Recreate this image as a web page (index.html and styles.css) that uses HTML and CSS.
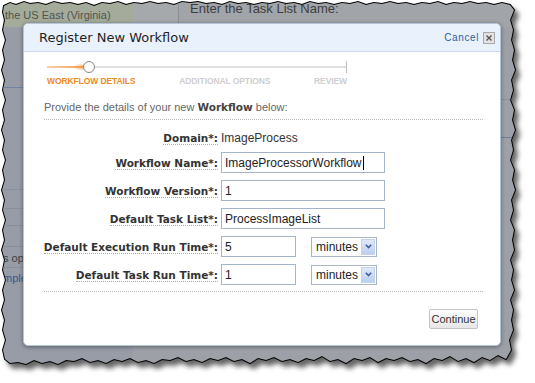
FILE: index.html
```html
<!DOCTYPE html>
<html lang="en">
<head>
<meta charset="utf-8">
<title>Register New Workflow</title>
<link rel="stylesheet" href="styles.css">
</head>
<body>
<div class="scene">
  <svg class="torn" width="535" height="383" viewBox="0 0 535 383">
    <defs>
      <clipPath id="tornClip" clipPathUnits="userSpaceOnUse">
        <polygon id="tornShape" points="4,6 10,3 16,5 24,2 30,4 38,3 46,5 54,2 62,4 70,3 78,5 86,3 94,6 102,3 110,4 118,2 126,5 134,3 142,4 150,2 158,4 166,3 174,5 182,2 190,3 198,2 206,4 214,3 222,5 230,2 238,4 246,3 254,5 262,3 270,4 278,2 286,4 294,3 302,5 310,2 318,4 326,3 334,5 342,3 350,4 358,2 366,5 374,3 382,4 390,2 398,4 406,3 414,5 422,3 430,4 438,2 446,5 454,3 462,4 470,2 478,4 486,3 494,5 502,3 510,5 514,10 510,20 513,30 511,40 514,50 512,60 515,70 511,80 513,90 510,100 514,110 512,120 515,130 511,140 513,150 510,160 514,170 512,180 515,190 511,200 513,210 510,220 514,230 512,240 514,250 510,260 513,270 511,280 514,290 510,300 513,310 511,320 513,330 509,340 511,350 506,359 498,355 490,360 482,357 474,362 466,358 458,361 450,356 442,360 434,358 426,363 418,359 410,361 402,357 394,360 386,358 378,362 370,357 362,360 354,358 346,363 338,359 330,361 322,356 314,360 306,358 298,362 290,359 282,361 274,357 266,360 258,358 250,363 242,359 234,361 226,357 218,360 210,358 202,362 194,359 186,361 178,357 170,360 162,359 154,363 146,360 138,362 130,358 122,361 114,359 106,363 98,360 90,362 82,358 74,361 66,360 58,364 50,361 42,363 34,360 26,364 18,362 10,363 5,359 3,350 6,340 3,330 5,320 2,310 5,300 3,290 6,280 3,270 5,260 2,250 5,240 3,230 6,220 3,210 5,200 2,190 5,180 3,170 6,160 3,150 5,140 2,130 5,120 3,110 6,100 3,90 5,80 2,70 5,60 3,50 6,40 3,30 5,20 3,12"/>
      </clipPath>
      <filter id="tornShadow" x="-5%" y="-5%" width="115%" height="115%">
        <feDropShadow dx="4" dy="5" stdDeviation="2.5" flood-color="#000" flood-opacity="0.6"/>
      </filter>
    </defs>
    <use href="#tornShape" class="torn-fill" filter="url(#tornShadow)"/>
  </svg>

  <div class="backdrop">
    <div class="bd-top">
      <div class="bd-region">the US East (Virginia)</div>
      <div class="bd-sep"></div>
      <div class="bd-heading">Enter the Task List Name:</div>
    </div>
    <div class="bd-body">
      <div class="bd-nav">
        <div class="nav-row nav-r1"></div>
        <div class="nav-row nav-r2"></div>
        <div class="nav-row nav-r3"></div>
        <div class="nav-row nav-r4"></div>
        <div class="nav-row nav-r5"></div>
        <div class="nav-row nav-text">s options</div>
        <div class="nav-row nav-link">mples</div>
      </div>
      <div class="bd-main">
        <div class="main-row main-r1"></div>
        <div class="main-row main-r2"></div>
      </div>
    </div>
  </div>

  <div class="dialog">
    <div class="dlg-head">
      <div class="dlg-title">Register New Workflow</div>
      <div class="dlg-cancel">
        <a class="cancel">Cancel</a>
        <span class="close"><svg width="6" height="6" viewBox="0 0 6 6"><path d="M0.5 0.5 L5.5 5.5 M5.5 0.5 L0.5 5.5" stroke="#555" stroke-width="1.4"/></svg></span>
      </div>
    </div>
    <div class="dlg-body">
      <div class="steps">
        <div class="track">
          <span class="trail"></span>
          <span class="glow"></span>
          <span class="knob"></span>
          <span class="tick"></span>
        </div>
        <div class="step-labels">
          <span class="step active">WORKFLOW DETAILS</span>
          <span class="step">ADDITIONAL OPTIONS</span>
          <span class="step">REVIEW</span>
        </div>
      </div>
      <p class="intro">Provide the details of your new <b>Workflow</b> below:</p>
      <div class="form">
        <div class="lbl"><span>Domain*:</span></div>
        <div class="val">ImageProcess</div>

        <div class="lbl"><span>Workflow Name*:</span></div>
        <div class="ctl"><input class="inp" type="text" value="ImageProcessorWorkflow"><span class="caret"></span></div>

        <div class="lbl"><span>Workflow Version*:</span></div>
        <div class="ctl"><input class="inp" type="text" value="1"></div>

        <div class="lbl"><span>Default Task List*:</span></div>
        <div class="ctl"><input class="inp" type="text" value="ProcessImageList"></div>

        <div class="lbl"><span>Default Execution Run Time*:</span></div>
        <div class="ctl"><input class="inp short" type="text" value="5"><div class="sel"><span>minutes</span><span class="sel-btn"><svg width="7" height="5" viewBox="0 0 7 5"><path d="M0.8 0.8 L3.5 3.6 L6.2 0.8" fill="none" stroke="#3b5e9c" stroke-width="1.5"/></svg></span></div></div>

        <div class="lbl"><span>Default Task Run Time*:</span></div>
        <div class="ctl"><input class="inp short" type="text" value="1"><div class="sel"><span>minutes</span><span class="sel-btn"><svg width="7" height="5" viewBox="0 0 7 5"><path d="M0.8 0.8 L3.5 3.6 L6.2 0.8" fill="none" stroke="#3b5e9c" stroke-width="1.5"/></svg></span></div></div>
      </div>
      <div class="actions">
        <button class="btn" type="button">Continue</button>
      </div>
    </div>
  </div>
</div>
</body>
</html>
```

FILE: styles.css
```css
body {
  margin: 0;
  background: #fff;
}

.scene {
  position: relative;
  width: 535px;
  height: 383px;
  overflow: hidden;
  font-family: "Liberation Sans", Arial, sans-serif;
}

.torn {
  position: absolute;
  left: 0;
  top: 0;
}

.torn-fill {
  fill: #9ea2a8;
  stroke: #000;
  stroke-width: 2;
}

/* background page, clipped to the torn shape */
.backdrop {
  position: absolute;
  left: 0;
  top: 0;
  width: 535px;
  height: 383px;
  clip-path: url(#tornClip);
  display: flex;
  flex-direction: column;
}

.bd-top {
  height: 27px;
  flex: none;
  display: flex;
}

.bd-region {
  width: 133px;
  box-sizing: border-box;
  background: #a4ab9b;
  color: #50544b;
  font-size: 11px;
  padding: 9px 0 0 5px;
  white-space: nowrap;
}

.bd-sep {
  width: 45px;
  background: #a6a9ac;
  border-right: 1px solid #8c9095;
}

.bd-heading {
  flex: 1;
  background: #a1a4a8;
  color: #3d3f42;
  font-size: 13px;
  padding: 1px 0 0 11px;
  white-space: nowrap;
}

.bd-body {
  flex: 1;
  display: flex;
}

.bd-nav {
  width: 133px;
  background: #979ca6;
  display: flex;
  flex-direction: column;
}

.nav-row {
  flex: none;
  border-bottom: 1px solid #8a909a;
  white-space: nowrap;
}

.nav-r1 { height: 60px; border-bottom-color: #6f84a3; }
.nav-r2 { height: 101px; }
.nav-r3 { height: 18px; }
.nav-r4 { height: 16px; }
.nav-r5 { height: 20px; }

.nav-text {
  height: 20px;
  line-height: 22px;
  font-size: 11px;
  color: #3b3f45;
  padding-left: 3px;
}

.nav-link {
  height: 20px;
  line-height: 20px;
  font-size: 11px;
  color: #35588e;
  padding-left: 3px;
  border-bottom: none;
}

.bd-main {
  flex: 1;
  background: #9da1a7;
  display: flex;
  flex-direction: column;
}

.main-row { flex: none; border-bottom: 1px solid #8b9097; }
.main-r1 { height: 72px; }
.main-r2 { height: 37px; border-bottom-color: #6f80a0; }

/* dialog */
.dialog {
  position: absolute;
  left: 23px;
  top: 23px;
  width: 478px;
  height: 323px;
  box-sizing: border-box;
  background: #fff;
  border: 1px solid #b4c4da;
  border-radius: 5px;
  box-shadow: 0 1px 4px rgba(0, 0, 0, 0.4);
  overflow: hidden;
  display: flex;
  flex-direction: column;
}

.dlg-head {
  flex: none;
  height: 27px;
  background: #e9f1fc;
  border-bottom: 1px solid #c9d8ec;
  display: flex;
  align-items: center;
  justify-content: space-between;
  padding: 0 5px 0 15px;
}

.dlg-title {
  font-family: "DejaVu Sans", Verdana, sans-serif;
  font-size: 13px;
  color: #1f1f1f;
}

.dlg-cancel {
  display: flex;
  align-items: center;
  gap: 4px;
}

.cancel {
  font-size: 10px;
  letter-spacing: 0.6px;
  color: #2f5f9c;
}

.close {
  width: 12px;
  height: 12px;
  box-sizing: border-box;
  border: 1px solid #a9a9a9;
  background: #e3e3e3;
  display: flex;
  align-items: center;
  justify-content: center;
}

.close svg { display: block; }

.dlg-body {
  flex: 1;
  display: flex;
  flex-direction: column;
  padding: 9px 17px 0 20px;
}

.steps {
  width: 300px;
  margin-left: 3px;
}

.track {
  position: relative;
  height: 12px;
}

.track::before {
  content: "";
  position: absolute;
  left: 0;
  right: 0;
  top: 5px;
  height: 2px;
  background: #e0e0e0;
}

.trail {
  position: absolute;
  left: 0;
  top: 5px;
  width: 40px;
  height: 2px;
  background: linear-gradient(90deg, #f8d0a8, #f29d50);
}

.glow {
  position: absolute;
  left: 26px;
  top: 2px;
  width: 14px;
  height: 8px;
  border-radius: 50%;
  background: radial-gradient(ellipse at 70% 50%, rgba(244, 150, 60, 0.75), rgba(244, 150, 60, 0) 70%);
}

.knob {
  position: absolute;
  left: 36px;
  top: 0;
  width: 12px;
  height: 12px;
  box-sizing: border-box;
  border: 1.5px solid #858585;
  border-radius: 50%;
  background: #fff;
}

.tick {
  position: absolute;
  right: 0;
  top: 0;
  width: 1px;
  height: 12px;
  background: #bdbdbd;
}

.step-labels {
  display: flex;
  justify-content: space-between;
  margin-top: 2px;
  line-height: 12px;
  font-family: "Liberation Sans", Arial, sans-serif;
  font-weight: bold;
  font-size: 8.5px;
  letter-spacing: -0.1px;
  color: #cfcfcf;
}

.step.active { color: #f08a24; }

.intro {
  margin: 13px 0 0;
  font-size: 11px;
  line-height: 14px;
  color: #666;
  padding-bottom: 5px;
  border-bottom: 1px dotted #bdbdbd;
}

.intro b {
  font-family: "DejaVu Sans", sans-serif;
  font-size: 10.5px;
  color: #444;
}

.form {
  display: grid;
  grid-template-columns: 174px auto;
  column-gap: 3px;
  row-gap: 7px;
  align-items: center;
  margin-top: 11px;
}

.lbl {
  justify-self: end;
  font-family: "DejaVu Sans", Verdana, sans-serif;
  font-weight: bold;
  font-size: 10.5px;
  color: #333;
  white-space: nowrap;
  line-height: 14px;
}

.lbl span {
  border-bottom: 1px dotted #aaa;
}

.val {
  font-size: 12px;
  color: #333;
  line-height: 14px;
}

.ctl {
  display: flex;
  align-items: center;
  position: relative;
}

.inp {
  box-sizing: border-box;
  width: 164px;
  height: 21px;
  margin: 0;
  border: 1px solid #a4b4c9;
  border-radius: 0;
  padding: 0 3px;
  font-family: "Liberation Sans", Arial, sans-serif;
  font-size: 12px;
  color: #222;
  background: #fff;
  outline: none;
}

.inp.short { width: 75px; }

.caret {
  position: absolute;
  left: 142px;
  top: 4px;
  width: 1px;
  height: 14px;
  background: #000;
}

.sel {
  box-sizing: border-box;
  margin-left: 15px;
  width: 66px;
  height: 20px;
  border: 1px solid #a8b6c8;
  display: flex;
  align-items: center;
  justify-content: space-between;
  padding: 0 1px 0 4px;
  font-size: 12px;
  color: #222;
}

.sel-btn {
  box-sizing: border-box;
  width: 14px;
  height: 16px;
  background: linear-gradient(#dfe8f8, #bccff0);
  border: 1px solid #c5d3ea;
  display: flex;
  align-items: center;
  justify-content: center;
}

.sel-btn svg { display: block; }

.actions {
  margin-top: 6px;
  border-top: 1px dotted #bdbdbd;
  display: flex;
  justify-content: flex-end;
  padding: 17px 5px 0 0;
}

.btn {
  box-sizing: border-box;
  width: 49px;
  height: 20px;
  padding: 0;
  font-family: "Liberation Sans", Arial, sans-serif;
  font-size: 11px;
  color: #333;
  background: linear-gradient(#fdfdfd, #e6e6e6);
  border: 1px solid #c4c4c4;
  border-radius: 2px;
}
```
